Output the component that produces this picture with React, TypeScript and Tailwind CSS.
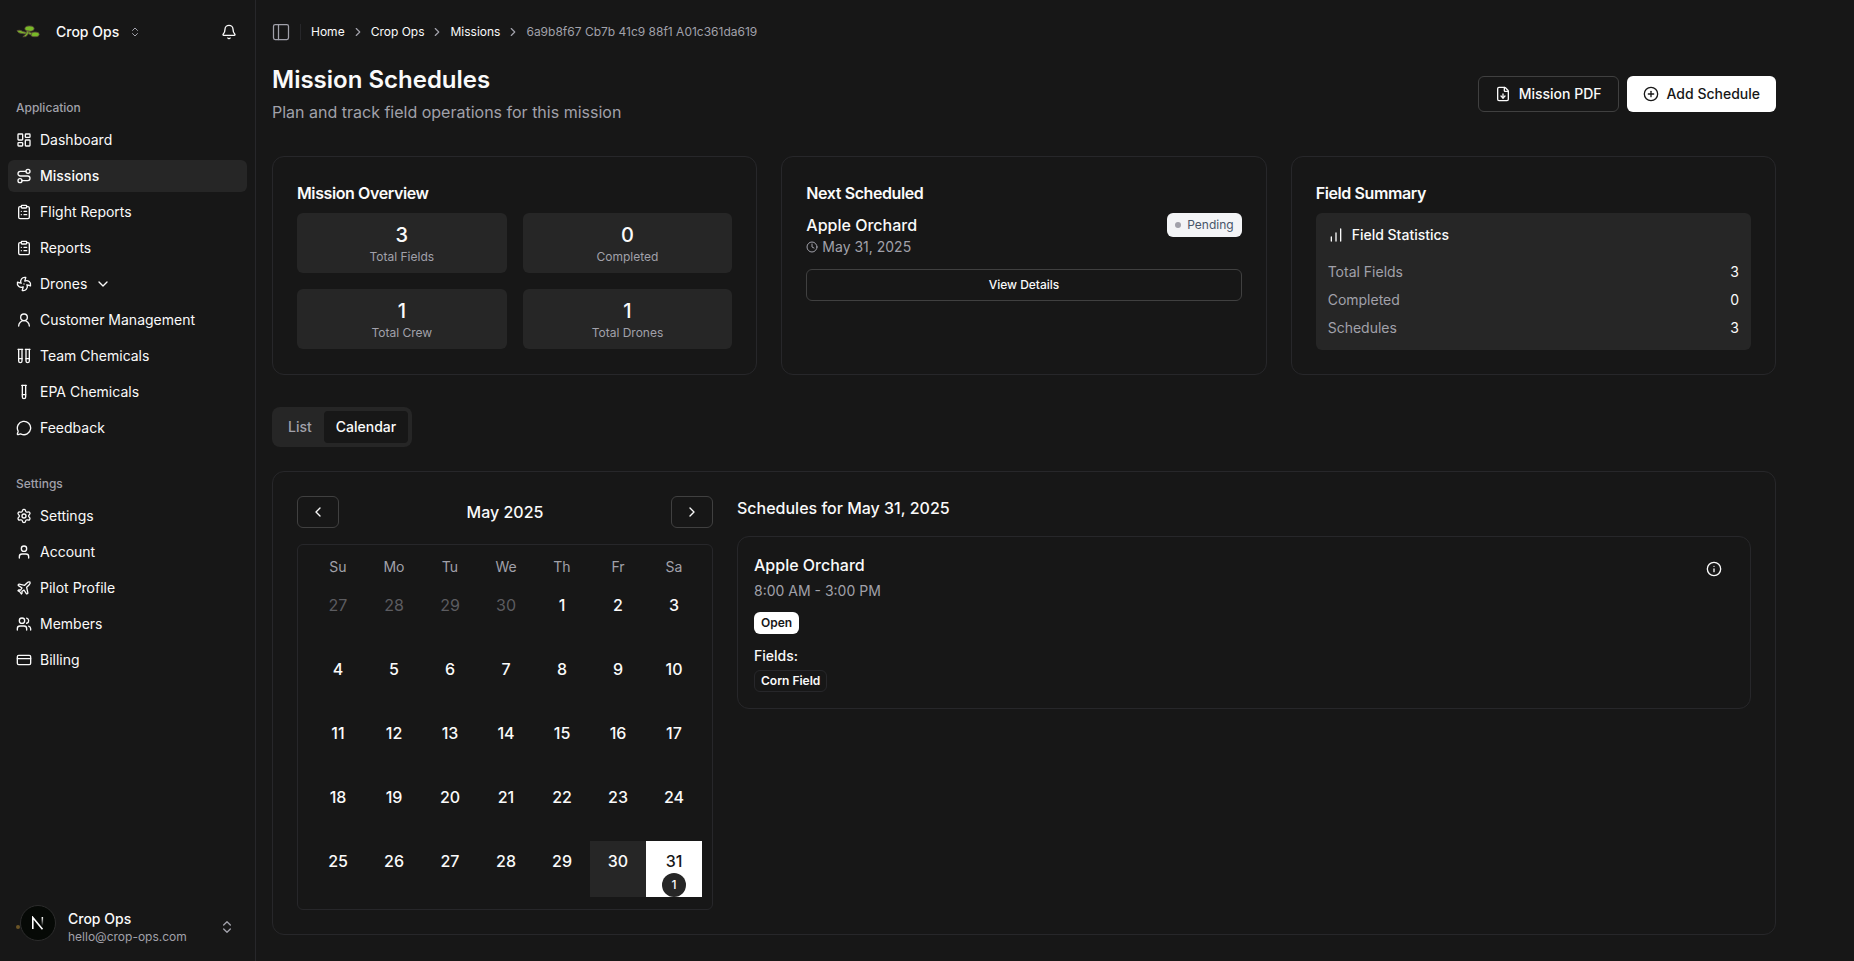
import { useState } from 'react'
import {
  Bell,
  ChartNoAxesColumnIncreasing,
  ChevronDown,
  ChevronLeft,
  ChevronRight,
  ChevronsUpDown,
  CirclePlus,
  ClipboardList,
  Clock,
  CreditCard,
  Fan,
  FileDown,
  Info,
  LayoutDashboard,
  MessageCircle,
  PanelLeft,
  Plane,
  Route,
  Settings,
  TestTube,
  TestTubes,
  User,
  UserRound,
  Users,
} from 'lucide-react'
import { clsx } from 'clsx'

const applicationItems = [
  { label: 'Dashboard', icon: LayoutDashboard },
  { label: 'Missions', icon: Route, active: true },
  { label: 'Flight Reports', icon: ClipboardList },
  { label: 'Reports', icon: ClipboardList },
  { label: 'Drones', icon: Fan, expandable: true },
  { label: 'Customer Management', icon: UserRound },
  { label: 'Team Chemicals', icon: TestTubes },
  { label: 'EPA Chemicals', icon: TestTube },
  { label: 'Feedback', icon: MessageCircle },
]

const settingsItems = [
  { label: 'Settings', icon: Settings },
  { label: 'Account', icon: User },
  { label: 'Pilot Profile', icon: Plane },
  { label: 'Members', icon: Users },
  { label: 'Billing', icon: CreditCard },
]

const breadcrumbs = ['Home', 'Crop Ops', 'Missions']

const overview = [
  { label: 'Total Fields', value: 3 },
  { label: 'Completed', value: 0 },
  { label: 'Total Crew', value: 1 },
  { label: 'Total Drones', value: 1 },
]

const fieldStats = [
  { label: 'Total Fields', value: 3 },
  { label: 'Completed', value: 0 },
  { label: 'Schedules', value: 3 },
]

const weekdays = ['Su', 'Mo', 'Tu', 'We', 'Th', 'Fr', 'Sa']

const weeks = [
  [27, 28, 29, 30, 1, 2, 3],
  [4, 5, 6, 7, 8, 9, 10],
  [11, 12, 13, 14, 15, 16, 17],
  [18, 19, 20, 21, 22, 23, 24],
  [25, 26, 27, 28, 29, 30, 31],
]

const TODAY = 30

type NavItem = {
  label: string
  icon: typeof Bell
  active?: boolean
  expandable?: boolean
}

function Logo() {
  return (
    <svg viewBox="0 0 24 14" className="w-6 h-3.5" aria-hidden="true">
      <g fill="#78b928" stroke="#5d4a3a" strokeWidth="0.8">
        <ellipse cx="13.5" cy="3.6" rx="4.6" ry="2.7" />
        <path d="M1 5.5 Q4 4.4 7 6.6 L11 7.6 L9.4 9 L5.5 8.4 Q2 8.4 1 5.5Z" />
        <path d="M11 6 L13.5 6 L12.2 9 L10 11.6 L6.8 11.8 L9.6 9.4Z" />
        <ellipse cx="19" cy="9.4" rx="4.2" ry="2.3" />
        <path d="M12.5 6.5 L16 8.4 L15 10 L12 8.4Z" />
      </g>
    </svg>
  )
}

function NavGroup({ title, items }: { title: string; items: NavItem[] }) {
  return (
    <div className="p-2">
      <h3 className="flex h-8 items-center px-2 text-xs font-medium text-[#a1a1aa]">{title}</h3>
      <ul className="flex flex-col gap-1">
        {items.map(({ label, icon: Icon, active, expandable }) => (
          <li key={label}>
            <a
              href="#"
              className={clsx(
                'flex h-8 items-center gap-2 rounded-md px-2 text-sm hover:bg-[#262626]',
                active && 'bg-[#262626] font-medium',
              )}
            >
              <Icon className="size-4 shrink-0" />
              <span>{label}</span>
              {expandable && <ChevronDown className="size-4" />}
            </a>
          </li>
        ))}
      </ul>
    </div>
  )
}

function Sidebar() {
  return (
    <aside className="sticky top-0 flex h-screen w-64 shrink-0 flex-col border-r border-[#27272a]">
      <div className="mb-5 flex h-16 items-center justify-between px-4">
        <button className="flex items-center text-sm font-medium">
          <Logo />
          <span className="ml-4">Crop Ops</span>
          <ChevronsUpDown className="ml-2.5 size-3 text-[#a1a1aa]" />
        </button>
        <button aria-label="Notifications" className="p-0.5">
          <Bell className="size-4" />
        </button>
      </div>

      <nav className="flex flex-1 flex-col gap-2">
        <NavGroup title="Application" items={applicationItems} />
        <NavGroup title="Settings" items={settingsItems} />
      </nav>

      <div className="relative px-2 pb-2.5">
        <button className="flex h-12 w-full items-center gap-2 rounded-md px-2 text-left">
          <span className="flex w-11 items-center">
            <span className="size-1 rounded-full bg-[#6b5426]" />
          </span>
          <span className="grid flex-1">
            <span className="text-sm font-medium">Crop Ops</span>
            <span className="text-xs text-[#a1a1aa]">hello@crop-ops.com</span>
          </span>
          <ChevronsUpDown className="mr-1 size-4 text-[#a1a1aa]" />
        </button>
        {/* Dev tools badge floats over the avatar */}
        <div className="absolute left-5 top-0.5 flex size-9 items-center justify-center rounded-full border border-[#2c2c2c] bg-[#060906]">
          <svg viewBox="0 0 14 14" className="size-3.5" fill="none" aria-hidden="true">
            <defs>
              <linearGradient id="badge-leg" x1="0" y1="0" x2="0" y2="1">
                <stop offset="0" stopColor="#fff" />
                <stop offset="1" stopColor="#fff" stopOpacity="0" />
              </linearGradient>
            </defs>
            <path d="M1.8 13V1.5L11.5 13.2" stroke="#fff" strokeWidth="1.6" />
            <rect x="10.6" y="1" width="1.5" height="9" fill="url(#badge-leg)" />
          </svg>
        </div>
      </div>
    </aside>
  )
}

function TopBar() {
  return (
    <header className="flex h-16 items-center px-4">
      <button aria-label="Toggle sidebar" className="-ml-px text-[#a1a1aa]">
        <PanelLeft className="size-5" strokeWidth={1.5} />
      </button>
      <div className="ml-[9px] mr-2.5 h-4 w-px bg-[#27272a]" />
      <nav aria-label="Breadcrumb">
        <ol className="flex items-center gap-1.5 text-xs text-[#a1a1aa]">
          {breadcrumbs.map((crumb) => (
            <li key={crumb} className="flex items-center gap-1.5">
              <a href="#" className="text-[#fafafa]">{crumb}</a>
              <ChevronRight className="size-3.5" />
            </li>
          ))}
          <li>6a9b8f67 Cb7b 41c9 88f1 A01c361da619</li>
        </ol>
      </nav>
    </header>
  )
}

function SummaryCards() {
  return (
    <div className="grid grid-cols-3 gap-6">
      <section className="rounded-xl border border-[#27272a] p-6">
        <h2 className="mb-2 font-semibold tracking-tight">Mission Overview</h2>
        <div className="grid grid-cols-2 gap-4">
          {overview.map((item) => (
            <div key={item.label} className="rounded-md bg-[#262626] p-2 text-center">
              <p className="text-xl font-medium">{item.value}</p>
              <p className="text-xs text-[#a1a1aa]">{item.label}</p>
            </div>
          ))}
        </div>
      </section>

      <section className="rounded-xl border border-[#27272a] p-6">
        <h2 className="mb-2 font-semibold tracking-tight">Next Scheduled</h2>
        <div className="flex items-start justify-between">
          <div>
            <p className="font-medium">Apple Orchard</p>
            <p className="flex items-center gap-1 text-sm text-[#a1a1aa]">
              <Clock className="size-3" />
              May 31, 2025
            </p>
          </div>
          <span className="flex h-6 items-center gap-1.5 rounded-md bg-[#f3f4f6] px-2 text-xs text-[#475569]">
            <span className="size-1.5 rounded-full bg-[#a1a1aa]" />
            Pending
          </span>
        </div>
        <button className="mt-3 h-8 w-full rounded-md border border-[#404040] text-xs font-medium hover:bg-[#262626]">
          View Details
        </button>
      </section>

      <section className="rounded-xl border border-[#27272a] p-6">
        <h2 className="mb-2 font-semibold tracking-tight">Field Summary</h2>
        <div className="rounded-md bg-[#262626] p-3">
          <h3 className="mb-[17px] flex items-center gap-2 text-sm font-medium">
            <ChartNoAxesColumnIncreasing className="size-4" />
            Field Statistics
          </h3>
          <dl className="space-y-2 text-sm">
            {fieldStats.map((stat) => (
              <div key={stat.label} className="flex justify-between">
                <dt className="text-[#a1a1aa]">{stat.label}</dt>
                <dd>{stat.value}</dd>
              </div>
            ))}
          </dl>
        </div>
      </section>
    </div>
  )
}

function Calendar() {
  const [selected, setSelected] = useState(31)

  return (
    <div className="w-[416px] shrink-0">
      <div className="mb-4 flex items-center justify-between">
        <button aria-label="Previous month" className="flex h-8 items-center rounded-md border border-[#404040] px-3">
          <ChevronLeft className="size-4" />
        </button>
        <h3 className="font-medium">May 2025</h3>
        <button aria-label="Next month" className="flex h-8 items-center rounded-md border border-[#404040] px-3">
          <ChevronRight className="size-4" />
        </button>
      </div>

      <div className="rounded-md border border-[#27272a] py-3 pl-3 pr-2.5">
        <table className="block">
          <thead className="block">
            <tr className="flex">
              {weekdays.map((day) => (
                <th key={day} scope="col" className="w-14 text-sm font-normal text-[#a1a1aa]">
                  {day}
                </th>
              ))}
            </tr>
          </thead>
          <tbody className="block">
            {weeks.map((week, i) => (
              <tr key={i} className="mt-2 flex">
                {week.map((day) => {
                  const outside = i === 0 && day > 20
                  const isSelected = !outside && day === selected
                  return (
                    <td key={day} className="size-14 p-0">
                      <button
                        disabled={outside}
                        onClick={() => setSelected(day)}
                        className={clsx(
                          'flex size-14 flex-col items-center pt-2',
                          outside ? 'text-[#5c5c60]' : 'font-medium',
                          isSelected && 'bg-white text-[#171717]',
                          !outside && !isSelected && day === TODAY && 'bg-[#262626]',
                        )}
                      >
                        {day}
                        {!outside && day === 31 && (
                          <span className="flex size-6 items-center justify-center rounded-full bg-[#262626] text-xs text-[#fafafa]">
                            1
                          </span>
                        )}
                      </button>
                    </td>
                  )
                })}
              </tr>
            ))}
          </tbody>
        </table>
      </div>
    </div>
  )
}

function DaySchedules() {
  return (
    <div className="min-w-0 flex-1">
      <h3 className="mb-4 font-medium">Schedules for May 31, 2025</h3>
      <article className="flex items-start justify-between rounded-xl border border-[#27272a] p-4">
        <div>
          <h4 className="font-medium">Apple Orchard</h4>
          <p className="mt-1 text-sm text-[#a1a1aa]">8:00 AM - 3:00 PM</p>
          <div className="mt-[11px] flex">
            <span className="rounded-md border border-transparent bg-white px-1.5 py-0.5 text-xs font-semibold text-[#171717]">
              Open
            </span>
          </div>
          <p className="mt-3 text-sm font-medium">Fields:</p>
          <div className="mt-1 flex">
            <span className="rounded-md border border-[#27272a] px-1.5 py-0.5 text-xs font-semibold">
              Corn Field
            </span>
          </div>
        </div>
        <button aria-label="Schedule details" className="flex h-8 items-center rounded-md px-3 hover:bg-[#262626]">
          <Info className="size-4" />
        </button>
      </article>
    </div>
  )
}

export default function App() {
  return (
    <div className="flex min-h-screen bg-[#171717] font-['Inter',sans-serif] text-[#fafafa]">
      <Sidebar />
      <main className="min-w-0 flex-1">
        <TopBar />
        <div className="max-w-[1536px] px-4 pb-6">
          <div className="mb-8 flex items-center justify-between">
            <div>
              <h1 className="text-2xl font-semibold">Mission Schedules</h1>
              <p className="mt-1 text-[#a1a1aa]">Plan and track field operations for this mission</p>
            </div>
            <div className="flex gap-2">
              <button className="flex h-9 items-center gap-2 rounded-md border border-[#404040] px-4 text-sm font-medium">
                <FileDown className="size-4" />
                Mission PDF
              </button>
              <button className="flex h-9 items-center gap-2 rounded-md bg-white px-4 text-sm font-medium text-[#171717]">
                <CirclePlus className="size-4" />
                Add Schedule
              </button>
            </div>
          </div>

          <SummaryCards />

          <div role="tablist" className="mb-6 mt-8 inline-flex rounded-lg bg-[#262626] p-1 text-sm font-medium">
            <button role="tab" aria-selected="false" className="rounded px-3 py-1.5 text-[#a1a1aa]">
              List
            </button>
            <button role="tab" aria-selected="true" className="rounded bg-[#171717] px-3 py-1.5">
              Calendar
            </button>
          </div>

          <section className="flex gap-6 rounded-xl border border-[#27272a] p-6">
            <Calendar />
            <DaySchedules />
          </section>
        </div>
      </main>
    </div>
  )
}
